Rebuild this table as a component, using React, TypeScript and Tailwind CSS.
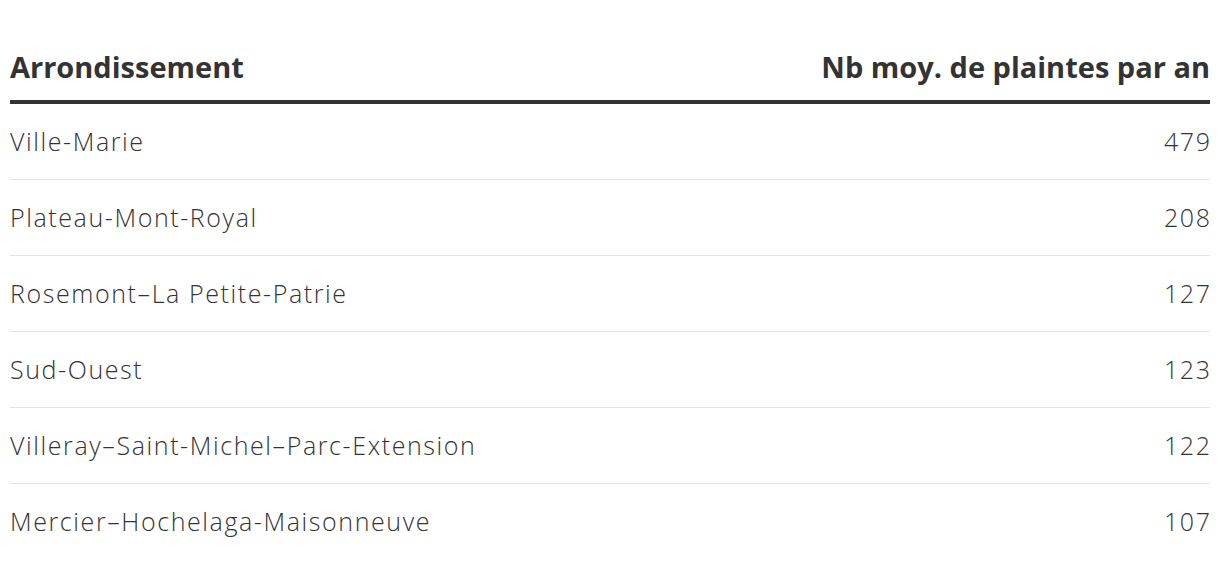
import React from 'react';

const rows: [string, number][] = [
    ['Ville-Marie', 479],
    ['Plateau-Mont-Royal', 208],
    ['Rosemont–La Petite-Patrie', 127],
    ['Sud-Ouest', 123],
    ['Villeray–Saint-Michel–Parc-Extension', 122],
    ['Mercier–Hochelaga-Maisonneuve', 107],
];

export default function App() {
    return (
        <div className="bg-white w-[1220px] h-[568px] overflow-hidden px-[10px] font-['Open_Sans','Noto_Sans',sans-serif] text-[#333]">
            <div className="flex items-end justify-between h-[104px] border-b-4 border-[#333] pb-[19px] text-[29px] font-bold leading-none">
                <span>Arrondissement</span>
                <span>Nb moy. de plaintes par an</span>
            </div>
            {rows.map(([name, n]) => (
                <div
                    key={name}
                    className="flex items-center justify-between h-[76px] border-b border-[#e4e4e4] last:border-b-0 text-[25px] font-light tracking-[1.6px]"
                >
                    <span>{name}</span>
                    <span className="-mr-[1.6px]">{n}</span>
                </div>
            ))}
        </div>
    );
}
